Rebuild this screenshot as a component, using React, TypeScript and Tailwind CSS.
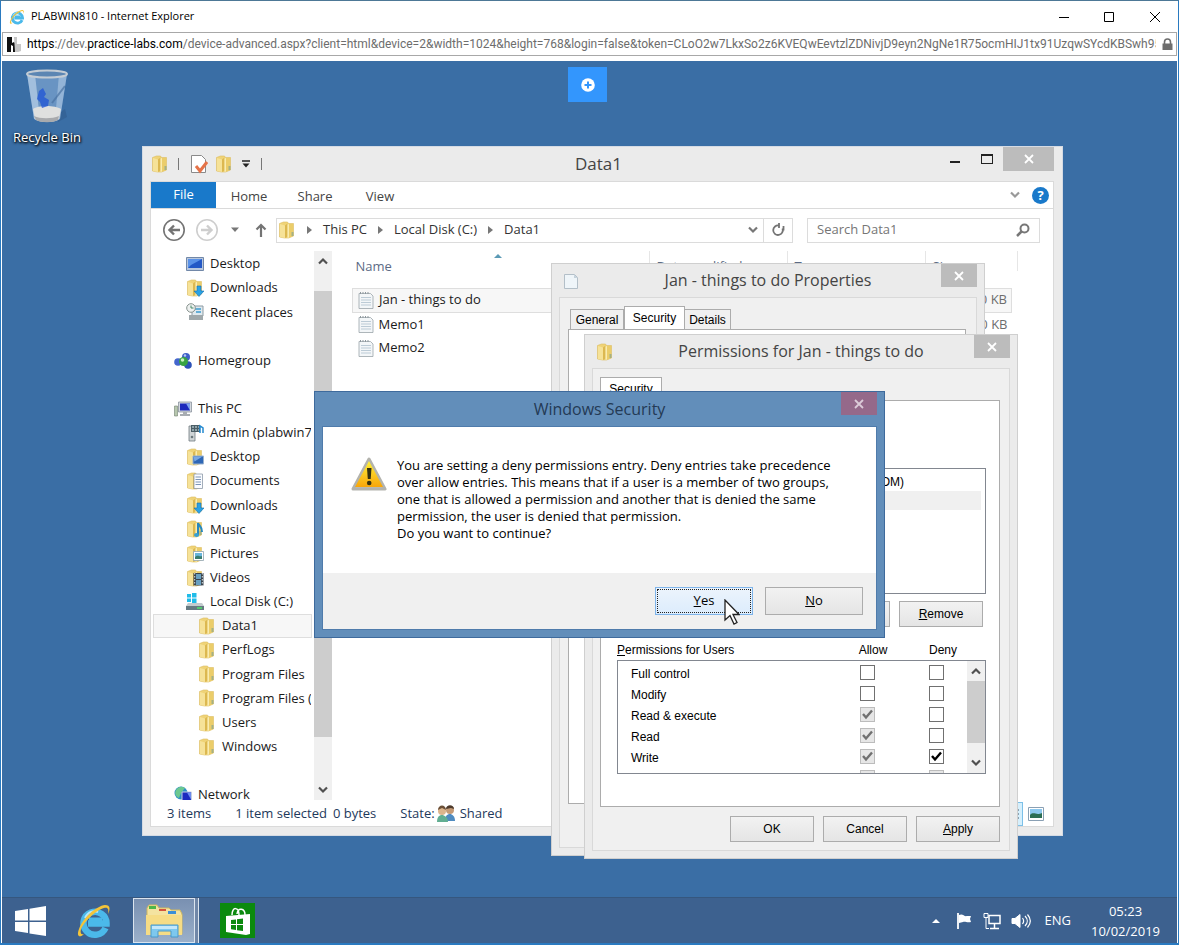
import type { ReactNode } from "react";
import clsx from "clsx";

type IconName =
  | "desktop"
  | "downloads"
  | "recent"
  | "homegroup"
  | "pc"
  | "media"
  | "folderDesktop"
  | "documents"
  | "music"
  | "pictures"
  | "videos"
  | "disk"
  | "folder"
  | "network";

type TreeItem = { label: string; icon: IconName; level: 0 | 1 | 2; selected?: boolean } | null;

const tree: TreeItem[] = [
  { label: "Desktop", icon: "desktop", level: 1 },
  { label: "Downloads", icon: "downloads", level: 1 },
  { label: "Recent places", icon: "recent", level: 1 },
  null,
  { label: "Homegroup", icon: "homegroup", level: 0 },
  null,
  { label: "This PC", icon: "pc", level: 0 },
  { label: "Admin (plabwin701)", icon: "media", level: 1 },
  { label: "Desktop", icon: "folderDesktop", level: 1 },
  { label: "Documents", icon: "documents", level: 1 },
  { label: "Downloads", icon: "downloads", level: 1 },
  { label: "Music", icon: "music", level: 1 },
  { label: "Pictures", icon: "pictures", level: 1 },
  { label: "Videos", icon: "videos", level: 1 },
  { label: "Local Disk (C:)", icon: "disk", level: 1 },
  { label: "Data1", icon: "folder", level: 2, selected: true },
  { label: "PerfLogs", icon: "folder", level: 2 },
  { label: "Program Files", icon: "folder", level: 2 },
  { label: "Program Files (x86)", icon: "folder", level: 2 },
  { label: "Users", icon: "folder", level: 2 },
  { label: "Windows", icon: "folder", level: 2 },
  null,
  { label: "Network", icon: "network", level: 0 },
];

const files = ["Jan - things to do", "Memo1", "Memo2"];

const permissions = [
  { name: "Full control", allow: false, inherited: false, deny: false },
  { name: "Modify", allow: false, inherited: false, deny: false },
  { name: "Read & execute", allow: true, inherited: true, deny: false },
  { name: "Read", allow: true, inherited: true, deny: false },
  { name: "Write", allow: true, inherited: true, deny: true },
];

const FolderShape = () => (
  <>
    <path d="M1.500 2.500 5.500 1h4l1 1.500h5v12.500l-5 2H6.500l-5-1z" fill="#efd377" stroke="#dcbc60" strokeWidth=".6" />
    <path d="M2 3 7 4.500V17L2 16z" fill="#f6e298" />
    <path d="M7 4.500 9.500 2.500v13L7 17z" fill="#dcb850" />
    <path d="M9.500 3.500 11 3v13.500l-1.500.5z" fill="#faecb0" />
    <path d="M11 3h4v12l-4 1.800z" fill="#ebcd6a" />
    <path d="M13.500 11h2v4h-2z" fill="#a5b184" />
  </>
);

const Icon = ({ name, className = "size-[18px]" }: { name: IconName; className?: string }) => (
  <svg viewBox="0 0 18 18" className={clsx("shrink-0", className)} aria-hidden="true">
    {["downloads", "folderDesktop", "documents", "music", "pictures", "videos", "folder"].includes(name) && (
      <FolderShape />
    )}
    {name === "desktop" && (
      <>
        <path d="M.5 2.500h17v13H.5z" fill="#b8c7dd" stroke="#7288a8" />
        <path d="M2 4h14v9H2z" fill="#2358c6" />
        <path d="M2 4h14L5 10l-3 3z" fill="#5a92e8" />
      </>
    )}
    {name === "downloads" && (
      <path d="M11 7h4v5h3l-5 5.500L8 12h3z" fill="#2aa2e4" stroke="#1671ad" strokeWidth=".6" />
    )}
    {name === "recent" && (
      <>
        <path d="M6 3h11v10H6z" fill="#dfe9ee" stroke="#8d9ba3" />
        <path d="M8 6h7M10 9h5" stroke="#3c9ad0" strokeWidth="1.500" />
        <path d="M3 12h14v5H3z" fill="#9fa8ab" />
        <circle cx="5" cy="5" r="4.300" fill="#eef1f0" stroke="#88938f" />
        <path d="M5 2.500V5h2.500" fill="none" stroke="#486" />
      </>
    )}
    {name === "homegroup" && (
      <>
        <circle cx="12" cy="5" r="4" fill="#3f61c8" />
        <circle cx="4" cy="10" r="3.800" fill="#4466cd" />
        <circle cx="14" cy="13" r="3.800" fill="#2c52b8" />
        <circle cx="9.500" cy="9.500" r="4.500" fill="#38a442" />
        <circle cx="8.500" cy="8" r="1.800" fill="#c8f0c0" />
        <circle cx="11" cy="3.500" r="1.200" fill="#b9cbf5" />
      </>
    )}
    {name === "pc" && (
      <>
        <path d="M.5 6h3v10h-3z" fill="#b7c7ae" stroke="#728070" strokeWidth=".6" />
        <path d="M4.500 2h13v10h-13z" fill="#d4d9df" stroke="#7e8894" strokeWidth=".7" />
        <path d="M6 3.500h10v7H6z" fill="#1c28bc" />
        <path d="M12 3.500h4v7z" fill="#7da2ee" />
        <path d="M9 12h4v2h3v2H6v-2h3z" fill="#a8adb2" />
      </>
    )}
    {name === "media" && (
      <>
        <path d="M3 2h6v15H3z" fill="#cfd4d6" stroke="#717b80" strokeWidth=".8" />
        <path d="M5 1h9v7H5z" fill="#4c5e66" />
        <path d="M6 3h7M6 6h7" stroke="#d1e8ee" strokeDasharray="2 1" />
        <path d="M14 9V2l3 2v5" fill="none" stroke="#2489cf" strokeWidth="1.500" />
        <circle cx="6" cy="13" r="1.300" fill="#6a777c" />
      </>
    )}
    {name === "folderDesktop" && (
      <>
        <path d="M7 8h10.500v8H7z" fill="#2e67b6" stroke="#9ab2ce" />
        <path d="M7.500 8.500h9l-8 5z" fill="#79a8e2" />
      </>
    )}
    {name === "documents" && (
      <>
        <path d="M8 2h8.500v14.500H8z" fill="#fafcff" stroke="#8d99a8" strokeWidth=".8" />
        <path d="M9.500 5H15M9.500 7.500H15M9.500 10H15M9.500 12.500H15" stroke="#7c95b6" />
      </>
    )}
    {name === "music" && (
      <>
        <path d="M12 15.500V3c1 3 4.500 4 4 9" fill="none" stroke="#2788be" strokeWidth="2" />
        <ellipse cx="10.500" cy="15" rx="2.500" ry="2" fill="#36a0d4" />
      </>
    )}
    {name === "pictures" && (
      <>
        <path d="M7.500 6.500h10v9h-10z" fill="#fff" stroke="#91a3ae" strokeWidth=".8" />
        <path d="M9 8h7v6H9z" fill="#69b5dc" />
        <path d="M9 12c3-3 4 0 7-1v3H9z" fill="#397d70" />
      </>
    )}
    {name === "videos" && (
      <>
        <path d="M7.500 4h10v12.500h-10z" fill="#39434c" />
        <path d="M10 5h5v5h-5zM10 11h5v5h-5z" fill="#689fc0" />
        <path d="M8.700 4v12.500M16.300 4v12.500" stroke="#dce4e8" strokeDasharray="1.500 1.500" />
      </>
    )}
    {name === "disk" && (
      <>
        <path d="M1 1h4v3.500H1zM6 0h4.500v4.500H6zM1 5.500h4V9H1zM6 5.500h4.500V10H6z" fill="#20bce9" />
        <path d="M2 10h14l2 3H0z" fill="#c3cbce" />
        <path d="M0 13h18v4H0z" fill="#667a82" />
        <path d="M11 14h5v2h-5z" fill="#52c96e" />
      </>
    )}
    {name === "network" && (
      <>
        <circle cx="7" cy="7" r="6.500" fill="#2d8fc8" />
        <path d="M2 4c3-5 8-3 9-2L7 7l-2 5C2 11 0 8 2 4z" fill="#6cc890" />
        <path d="M8 6h9.500v9H8z" fill="#1c2bc0" stroke="#c4cde0" />
        <path d="M13 6.500h4v7z" fill="#6c8cf0" />
      </>
    )}
  </svg>
);

const NoteIcon = () => (
  <svg viewBox="0 0 16 18" className="h-[18px] w-4 shrink-0" aria-hidden="true">
    <path d="M1 2.500h11.500L15 5v12.500H1z" fill="#f3f6f8" stroke="#9aa4aa" strokeWidth=".8" />
    <path d="M3 6.500h10M3 9h10M3 11.500h10M3 14h10" stroke="#bccbd6" />
    <path d="M2.500 3V1M5 3V1M7.500 3V1M10 3V1" stroke="#8d979d" />
  </svg>
);

const IeIcon = ({ className }: { className: string }) => (
  <svg viewBox="0 0 36 36" className={clsx("shrink-0", className)} aria-hidden="true">
    <path d="M29.500 25A11.500 11.500 0 1 1 30.500 20.500H12" fill="none" stroke="#4bb9ea" strokeWidth="6.500" />
    <path d="M13 16.500h13" stroke="#4bb9ea" strokeWidth="4" />
    <path d="M9 15c3-6 8-8 13-6" fill="none" stroke="#b7e8fb" strokeWidth="2" />
    <path
      d="M8 31c-4 4-8 3-5-5C7 15 20 3 29 2c6 0 5 5 3 9 1-5 0-7-4-6C20 7 8 19 5 26c-1 4 0 6 3 5z"
      fill="#f3c43a"
    />
  </svg>
);

const Chevron = ({ up = false, className = "text-[#505050]" }: { up?: boolean; className?: string }) => (
  <svg viewBox="0 0 10 8" className={clsx("h-2 w-[10px] shrink-0", up && "rotate-180", className)} aria-hidden="true">
    <path d="M1 1.500l4 4 4-4" fill="none" stroke="currentColor" strokeWidth="2.200" />
  </svg>
);

const CloseButton = ({ className }: { className: string }) => (
  <button aria-label="Close" className={clsx("flex items-center justify-center", className)}>
    <svg viewBox="0 0 10 10" className="size-[10px]" aria-hidden="true">
      <path d="M1 1l8 8M9 1L1 9" stroke="currentColor" strokeWidth="1.800" />
    </svg>
  </button>
);

const ScrollBar = ({ thumb }: { thumb: string }) => (
  <div className="flex w-[18px] shrink-0 flex-col bg-[#f0f0f0]">
    <button aria-label="Scroll up" className="flex h-5 shrink-0 items-center justify-center">
      <Chevron up />
    </button>
    <div className={clsx("bg-[#cdcdcd]", thumb)} />
    <button aria-label="Scroll down" className="mt-auto flex h-5 shrink-0 items-center justify-center">
      <Chevron />
    </button>
  </div>
);

const ClassicButton = ({ children }: { children: ReactNode }) => (
  <button className="h-[26px] w-[84px] border border-[#acacac] bg-linear-to-b from-[#f2f2f2] to-[#e5e5e5] text-black">
    {children}
  </button>
);

const Tick = ({ label, checked, disabled = false }: { label: string; checked: boolean; disabled?: boolean }) => (
  <span className="inline-grid size-[15px] place-items-center">
    <input
      type="checkbox"
      aria-label={label}
      defaultChecked={checked}
      disabled={disabled}
      className="col-start-1 row-start-1 size-[15px] appearance-none border border-[#707070] bg-white disabled:border-[#bcbcbc] disabled:bg-[#e6e6e6]"
    />
    {checked && (
      <svg
        viewBox="0 0 11 11"
        className={clsx("pointer-events-none col-start-1 row-start-1 size-[11px]", disabled ? "text-[#707070]" : "text-black")}
        aria-hidden="true"
      >
        <path d="M1 5l3 3.500L10 1.500" fill="none" stroke="currentColor" strokeWidth="2.400" />
      </svg>
    )}
  </span>
);

const BrowserChrome = () => (
  <header className="bg-white text-black">
    <div className="flex h-[31px] items-center pl-2">
      <IeIcon className="size-4" />
      <h1 className="ml-[6px] font-['Open_Sans',sans-serif] text-[11px]">PLABWIN810 - Internet Explorer</h1>
      <div className="ml-auto flex">
        <button aria-label="Minimize" className="flex h-7 w-[45px] items-center justify-center">
          <svg viewBox="0 0 12 12" className="size-3">
            <path d="M1 6.500h10" stroke="#000" />
          </svg>
        </button>
        <button aria-label="Maximize" className="flex h-7 w-[45px] items-center justify-center">
          <svg viewBox="0 0 12 12" className="size-3">
            <path d="M1.500 1.500h9v9h-9z" fill="none" stroke="#000" />
          </svg>
        </button>
        <button aria-label="Close window" className="flex h-7 w-[47px] items-center justify-center">
          <svg viewBox="0 0 12 12" className="size-3">
            <path d="M1 1l10 10M11 1L1 11" stroke="#000" />
          </svg>
        </button>
      </div>
    </div>
    <div className="mx-px mb-[5px] flex h-6 items-center border border-[#a8a8a8] pr-[3px] pl-1">
      <svg viewBox="0 0 14 16" className="h-4 w-[14px] shrink-0" aria-hidden="true">
        <path d="M0 1h5v6l2-1 1 1v9H6v-6L4 9v7H0z" fill="#111" />
        <path d="M7 1h3v7h4v7l-3 1H8z" fill="#c7c7c7" />
      </svg>
      <p className="mx-[6px] min-w-0 flex-1 overflow-hidden font-[Roboto,sans-serif] text-[12px] whitespace-nowrap text-[#6d6d6d]">
        <span className="text-black">https</span>://dev.<span className="text-black">practice-labs.com</span>
        /device-advanced.aspx?client=html&amp;device=2&amp;width=1024&amp;height=768&amp;login=false&amp;token=CLoO2w7LkxSo2z6KVEQwEevtzlZDNivjD9eyn2NgNe1R75ocmHIJ1tx91UzqwSYcdKBSwh950
      </p>
      <svg viewBox="0 0 11 13" className="h-[13px] w-[11px] shrink-0" aria-hidden="true">
        <path d="M2.500 6V4a3 3 0 0 1 6 0v2" fill="none" stroke="#6d6d6d" strokeWidth="1.600" />
        <path d="M.5 5.500h10V12H.5z" fill="#6d6d6d" />
      </svg>
    </div>
  </header>
);

const RecycleBin = () => (
  <div className="absolute top-2 left-[5px] flex w-20 flex-col items-center">
    <svg viewBox="0 0 44 54" className="h-[54px] w-11" aria-hidden="true">
      <path d="M32 46l8-6 2 8-9 5z" fill="#2d5789" opacity=".5" />
      <path d="M2 5h40l-7 45c-4 4-22 4-26 0z" fill="#8fb5dc" opacity=".55" />
      <path d="M2 5h8l5 46-6-1z" fill="#dceaf7" opacity=".5" />
      <path d="M34 5h8l-7 45-5 1z" fill="#d2e3f4" opacity=".4" />
      <path d="M8 40c5-4 22-4 28 0l-2 10c-4 4-20 4-24 0z" fill="#dfe0df" />
      <path d="M9 47c6 3 18 3 25 0l-1 4c-5 3-17 3-22 0z" fill="#a8aaad" />
      <path d="M14 22l4-3 3 6-2 3 5 3-1 6-6 2-2-6-3-3z" fill="#2358d4" opacity=".8" />
      <path d="M27 34l13-17" stroke="#4a73a3" strokeWidth="2" opacity=".7" />
      <ellipse cx="22" cy="5" rx="20" ry="3.500" fill="#5c86b3" stroke="#c4ccd4" strokeWidth="2" />
    </svg>
    <span className="mt-1 font-['Open_Sans',sans-serif] text-[13px] leading-5 whitespace-nowrap text-white [text-shadow:1px_1px_2px_#000,0_1px_3px_#000]">
      Recycle Bin
    </span>
  </div>
);

const ExplorerTitle = () => (
  <div className="flex h-[34px] shrink-0 items-center">
    <div className="flex flex-1 items-center pl-px">
      <Icon name="folder" />
      <span className="ml-[9px] h-3 w-px bg-[#777]" />
      <button aria-label="Properties" className="ml-[11px]">
        <svg viewBox="0 0 18 20" className="h-5 w-[18px]">
          <path d="M1.500 1.500h10l4 4v13h-14z" fill="#fff" stroke="#8a8a8a" />
          <path d="M6 12l4 5 7-9" fill="none" stroke="#e57348" strokeWidth="3" />
        </svg>
      </button>
      <button aria-label="New folder" className="ml-[7px]">
        <Icon name="folder" />
      </button>
      <button aria-label="Customize toolbar" className="ml-2">
        <svg viewBox="0 0 10 8" className="h-2 w-[10px]">
          <path d="M1 1h8" stroke="#222" strokeWidth="1.500" />
          <path d="M1.500 3.500h7L5 7.500z" fill="#222" />
        </svg>
      </button>
      <span className="ml-[10px] h-3 w-px bg-[#777]" />
    </div>
    <h2 className="mr-2 text-[17px] text-[#444]">Data1</h2>
    <div className="flex flex-1 justify-end self-start">
      <button aria-label="Minimize" className="flex h-6 w-8 items-center justify-center">
        <span className="mt-[6px] h-[2px] w-[10px] bg-[#222]" />
      </button>
      <button aria-label="Maximize" className="flex h-6 w-8 items-center justify-center">
        <span className="h-[10px] w-3 border border-t-2 border-[#222]" />
      </button>
      <CloseButton className="h-6 w-[51px] bg-[#bcbcbc] text-white" />
    </div>
  </div>
);

const Crumb = ({ children }: { children: ReactNode }) => (
  <>
    <svg viewBox="0 0 5 8" className="mx-[11px] h-2 w-[5px] shrink-0" aria-hidden="true">
      <path d="M0 0l5 4-5 4z" fill="#777" />
    </svg>
    <a href="#" className="whitespace-nowrap">
      {children}
    </a>
  </>
);

const AddressRow = () => (
  <div className="flex h-[42px] shrink-0 items-center pr-[13px] pl-[11px]">
    <button aria-label="Back">
      <svg viewBox="0 0 24 24" className="size-6" fill="none" stroke="#747474">
        <circle cx="12" cy="12" r="10.200" strokeWidth="1.600" />
        <path d="M18 12H8M12 7.500L7.500 12l4.500 4.500" strokeWidth="2.400" />
      </svg>
    </button>
    <button aria-label="Forward" className="ml-[9px]">
      <svg viewBox="0 0 24 24" className="size-6" fill="none" stroke="#cecece">
        <circle cx="12" cy="12" r="10.200" strokeWidth="1.600" />
        <path d="M6 12h10M12 7.500l4.500 4.500-4.500 4.500" strokeWidth="2.400" />
      </svg>
    </button>
    <button aria-label="Recent locations" className="ml-[11px]">
      <svg viewBox="0 0 10 6" className="h-[6px] w-[10px]">
        <path d="M1 .5h8L5 5z" fill="#777" />
      </svg>
    </button>
    <button aria-label="Up" className="ml-[15px]">
      <svg viewBox="0 0 12 14" className="h-[14px] w-3" fill="none" stroke="#747474" strokeWidth="2.200">
        <path d="M6 14V2M1.500 6.500L6 2l4.500 4.500" />
      </svg>
    </button>
    <nav
      aria-label="Address"
      className="ml-[9px] flex h-[25px] min-w-0 flex-1 items-center border border-[#dcdcdc] pl-px text-[#333]"
    >
      <Icon name="folder" />
      <Crumb>This PC</Crumb>
      <Crumb>Local Disk (C:)</Crumb>
      <Crumb>Data1</Crumb>
      <button aria-label="Previous locations" className="mr-px ml-auto p-1">
        <Chevron className="text-[#777]" />
      </button>
      <button aria-label="Refresh" className="flex h-full w-[29px] items-center justify-center border-l border-[#dcdcdc]">
        <svg viewBox="0 0 14 14" className="size-[14px]" fill="none" stroke="#747474" strokeWidth="1.800">
          <path d="M8 2.500a4.800 4.800 0 1 0 3.500 3" />
          <path d="M12.500 7.500V3M8 0v5" />
        </svg>
      </button>
    </nav>
    <label className="ml-[14px] flex h-[25px] w-[233px] items-center border border-[#dcdcdc] pr-[9px] pl-[9px]">
      <input
        aria-label="Search Data1"
        placeholder="Search Data1"
        className="min-w-0 flex-1 outline-none placeholder:text-[#767676]"
      />
      <svg viewBox="0 0 14 14" className="size-[14px]" fill="none" stroke="#777">
        <circle cx="8.500" cy="5.500" r="4" strokeWidth="2" />
        <path d="M5.500 8.500L1 13" strokeWidth="2.500" />
      </svg>
    </label>
  </div>
);

const NavTree = () => (
  <div className="w-[163px] shrink-0 overflow-hidden pt-px">
    <ul className="grid h-[555px] auto-rows-fr">
      {tree.map((item, i) =>
        item ? (
          <li
            key={i}
            className={clsx(
              "mx-[2px] flex items-center gap-[6px] overflow-hidden border whitespace-nowrap",
              item.selected ? "border-[#dedede] bg-[#f7f7f7]" : "border-transparent",
              item.level === 0 && "pl-5",
              item.level === 1 && "pl-8",
              item.level === 2 && "pl-11"
            )}
          >
            <Icon name={item.icon} />
            <span>{item.label}</span>
          </li>
        ) : (
          <li key={i} aria-hidden="true" />
        )
      )}
    </ul>
  </div>
);

const FileTable = () => (
  <div className="relative min-w-0 flex-1 overflow-hidden pl-5">
    <svg viewBox="0 0 8 4" className="absolute top-[3px] left-[162px] h-1 w-2" aria-hidden="true">
      <path d="M0 4l4-4 4 4z" fill="#5b9ab5" />
    </svg>
    <table className="w-[665px] table-fixed border-collapse text-left">
      <colgroup>
        <col className="w-[296px]" />
        <col className="w-[138px]" />
        <col className="w-[138px]" />
        <col className="w-[87px]" />
        <col className="w-[6px]" />
      </colgroup>
      <thead>
        <tr className="h-[37px] align-top text-[#5c6b85]">
          {["Name", "Date modified", "Type", "Size"].map((h, i) => (
            <th key={h} className="p-0 font-normal">
              <div
                className={clsx(
                  "h-5 pt-[5px] leading-5 whitespace-nowrap",
                  i === 0 ? "pl-[3px]" : "border-l border-[#e6e6e6] pl-[7px]"
                )}
              >
                {h}
              </div>
            </th>
          ))}
          <th className="p-0">
            <div className="h-5 border-r border-[#e6e6e6]" />
          </th>
        </tr>
      </thead>
      <tbody>
        {files.map((file, i) => (
          <tr key={file} className="h-6">
            <td className={clsx("p-0", i === 0 && "border border-r-0 border-[#dedede] bg-[#f7f7f7]")}>
              <div className="flex items-center gap-[5px] pl-[5px]">
                <NoteIcon />
                {file}
              </div>
            </td>
            <td
              colSpan={3}
              className={clsx(
                "p-0 pr-1 text-right text-[#6d6d6d]",
                i === 0 && "border border-l-0 border-[#dedede] bg-[#f7f7f7]"
              )}
            >
              0 KB
            </td>
            <td className="p-0" />
          </tr>
        ))}
      </tbody>
    </table>
  </div>
);

const Explorer = () => (
  <section
    aria-label="Data1"
    className="absolute top-[85px] left-[140px] flex h-[690px] w-[921px] flex-col border border-[#d5dbe4] bg-[#ebebeb] pr-2 pb-2 pl-[7px] font-['Open_Sans',sans-serif] text-[13px] text-[#1a1a1a]"
  >
    <ExplorerTitle />
    <div className="flex min-h-0 flex-1 flex-col border border-[#dadada] bg-white">
      <div className="flex h-[27px] shrink-0 items-center border-b border-[#dadada] text-[#444]">
        <button className="h-full w-[65px] bg-[#1979ca] text-white">File</button>
        <button className="w-[66px] pt-1">Home</button>
        <button className="w-[66px] pt-1">Share</button>
        <button className="w-[64px] pt-1">View</button>
        <button aria-label="Expand the ribbon" className="ml-auto">
          <Chevron className="text-[#999]" />
        </button>
        <button
          aria-label="Help"
          className="mr-1 ml-3 size-[17px] rounded-full bg-[#1979ca] text-[13px] leading-[17px] font-bold text-white"
        >
          ?
        </button>
      </div>
      <AddressRow />
      <div className="flex min-h-0 flex-1">
        <NavTree />
        <ScrollBar thumb="mt-5 h-[446px]" />
        <FileTable />
      </div>
      <footer className="flex h-[26px] shrink-0 items-center pt-px pr-[9px] pl-4 text-[#1e395b]">
        <span>3 items</span>
        <span className="ml-6">1 item selected</span>
        <span className="ml-[6px]">0 bytes</span>
        <span className="ml-6">State:</span>
        <svg viewBox="0 0 20 18" className="ml-px h-[18px] w-5" aria-hidden="true">
          <path d="M9 16c0-6 3-7 5-7s5 2 5 7z" fill="#4f8bc0" />
          <circle cx="14" cy="5" r="4" fill="#c49a76" />
          <path d="M10 4c0-5 8-5 8 0l-3-1z" fill="#4e3a2c" />
          <path d="M1 17c0-6 3-7 5-7s6 2 6 7z" fill="#62ae92" />
          <circle cx="6" cy="6" r="4" fill="#dcb58c" />
          <path d="M2 5c0-6 8-6 8 0L6 3z" fill="#6b5038" />
        </svg>
        <span className="ml-1">Shared</span>
        <div className="ml-auto flex items-center">
          <button aria-label="Details view" className="flex size-6 items-center justify-center border border-[#7cc0e8] bg-[#d5effc]">
            <svg viewBox="0 0 20 12" className="h-3 w-5">
              <path d="M1 2h3M1 6h3M1 10h3M6 2h6M6 6h6M6 10h6M14 2h4M14 6h4M14 10h4" stroke="#456" />
            </svg>
          </button>
          <button aria-label="Large icons" className="ml-[5px]">
            <svg viewBox="0 0 16 14" className="h-[14px] w-4">
              <path d="M.5 .5h15v13H.5z" fill="#fff" stroke="#8aa0b4" />
              <path d="M2 2h12v9H2z" fill="#8cc8ee" />
              <path d="M2 8c4-4 6 1 12-2v5H2z" fill="#2c6e54" />
            </svg>
          </button>
        </div>
      </footer>
    </div>
  </section>
);

const PropertiesDialog = () => (
  <section
    aria-label="Jan - things to do Properties"
    className="absolute top-[202px] left-[549px] flex h-[593px] w-[434px] flex-col border border-[#cfcfcf] bg-[#ebebeb] px-[7px] pb-[7px] font-['Liberation_Sans',sans-serif] text-[12px] text-black"
  >
    <div className="flex h-[33px] shrink-0">
      <div className="flex w-9 items-center pl-[5px]">
        <svg viewBox="0 0 14 16" className="h-4 w-[14px]" aria-hidden="true">
          <path d="M.5 1.500h10l3 3v11H.5z" fill="#eff5f9" stroke="#b3bfc8" />
          <path d="M10 1.500v3.500h3.500z" fill="#c5d2db" />
        </svg>
      </div>
      <h2 className="flex-1 text-center font-['Open_Sans',sans-serif] text-[16px] leading-8 text-[#444]">
        Jan - things to do Properties
      </h2>
      <CloseButton className="h-[23px] w-9 bg-[#bcbcbc] text-white" />
    </div>
    <div className="flex min-h-0 flex-1 flex-col border border-[#d9d9d9] bg-[#f0f0f0] pt-2 pr-[10px] pb-[43px] pl-2">
      <div role="tablist" className="flex items-end pl-[2px]">
        <button role="tab" className="h-5 w-[54px] border border-b-0 border-[#acacac]">
          General
        </button>
        <button role="tab" aria-selected="true" className="h-[23px] w-[61px] border border-b-0 border-[#acacac] bg-white">
          Security
        </button>
        <button role="tab" className="h-5 w-[46px] border border-b-0 border-l-0 border-[#acacac]">
          Details
        </button>
      </div>
      <div className="flex-1 border border-[#acacac] bg-white" />
    </div>
  </section>
);

const PermissionsDialog = () => (
  <section
    aria-label="Permissions for Jan - things to do"
    className="absolute top-[273px] left-[582px] flex h-[525px] w-[434px] flex-col border border-[#cfcfcf] bg-[#ebebeb] px-[7px] pb-[7px] font-['Liberation_Sans',sans-serif] text-[12px] text-black"
  >
    <div className="flex h-[33px] shrink-0">
      <div className="flex w-9 items-center pl-1">
        <Icon name="folder" />
      </div>
      <h2 className="flex-1 text-center font-['Open_Sans',sans-serif] text-[16px] leading-8 text-[#444]">
        Permissions for Jan - things to do
      </h2>
      <CloseButton className="h-[23px] w-9 bg-[#bcbcbc] text-white" />
    </div>
    <div className="flex min-h-0 flex-1 flex-col border border-[#d9d9d9] bg-[#f0f0f0] pt-2 pr-[9px] pl-[7px]">
      <div role="tablist" className="flex">
        <button role="tab" aria-selected="true" className="h-[23px] w-[62px] border border-b-0 border-[#acacac] bg-white">
          Security
        </button>
      </div>
      <div className="flex h-[407px] flex-col border border-[#acacac] bg-white px-4 pt-[67px]">
        <ul className="mr-[-3px] h-[126px] shrink-0 border border-[#828790] py-[3px] pr-1">
          <li className="flex h-[19px] items-center justify-end pr-[77px]">(COM)</li>
          <li className="h-[19px] bg-[#f0f0f0]" />
        </ul>
        <div className="mt-[7px] flex justify-end gap-[9px]">
          <ClassicButton>
            A<u>d</u>d...
          </ClassicButton>
          <ClassicButton>
            <u>R</u>emove
          </ClassicButton>
        </div>
        <div className="mt-[13px] mr-[-3px] flex h-5 shrink-0 items-center">
          <h3 className="flex-1">
            <u>P</u>ermissions for Users
          </h3>
          <span className="w-[70px] text-center">Allow</span>
          <span className="w-[70px] text-center">Deny</span>
          <span className="w-[8px]" />
        </div>
        <div className="mr-[-3px] flex h-[114px] shrink-0 overflow-hidden border border-[#828790]">
          <table className="mt-[2px] flex-1 table-fixed self-start">
            <colgroup>
              <col />
              <col className="w-[70px]" />
              <col className="w-[70px]" />
            </colgroup>
            <tbody>
              {permissions.map((p) => (
                <tr key={p.name} className="h-[21px]">
                  <td className="p-0 pl-[13px]">{p.name}</td>
                  <td className="p-0 pl-[33px] leading-none">
                    <Tick label={`Allow ${p.name}`} checked={p.allow} disabled={p.inherited} />
                  </td>
                  <td className="p-0 pl-8 leading-none">
                    <Tick label={`Deny ${p.name}`} checked={p.deny} />
                  </td>
                </tr>
              ))}
              <tr className="h-[21px]">
                <td className="p-0" />
                <td className="p-0 pl-[33px] leading-none">
                  <Tick label="Allow special permissions" checked={false} disabled />
                </td>
                <td className="p-0 pl-8 leading-none">
                  <Tick label="Deny special permissions" checked={false} disabled />
                </td>
              </tr>
            </tbody>
          </table>
          <ScrollBar thumb="h-[62px]" />
        </div>
      </div>
      <div className="mt-[9px] flex justify-end gap-[9px]">
        <ClassicButton>OK</ClassicButton>
        <ClassicButton>Cancel</ClassicButton>
        <ClassicButton>
          <u>A</u>pply
        </ClassicButton>
      </div>
    </div>
  </section>
);

const SecurityDialog = () => (
  <section
    role="alertdialog"
    aria-label="Windows Security"
    className="absolute top-[330px] left-[312px] flex h-[247px] w-[571px] flex-col border border-[#3e6a9c] bg-[#628eba] px-[7px] pb-[7px] font-['Open_Sans',sans-serif] text-[13px] text-black"
  >
    <div className="flex h-[34px] shrink-0">
      <h2 className="flex-1 pl-9 text-center text-[16px] leading-[34px] text-[#243a55]">Windows Security</h2>
      <CloseButton className="h-[23px] w-9 bg-[#95698a] text-[#dccbd8]" />
    </div>
    <div className="flex min-h-0 flex-1 flex-col border border-[#4f7bab] bg-white">
      <div className="flex flex-1 pt-[30px] pl-7">
        <svg viewBox="0 0 36 34" className="h-[34px] w-9 shrink-0" aria-hidden="true">
          <defs>
            <linearGradient id="warn" x1="0" y1="0" x2="0" y2="1">
              <stop offset="0" stopColor="#fff03a" />
              <stop offset="1" stopColor="#f8a60a" />
            </linearGradient>
          </defs>
          <path d="M18 2l16 30H2z" fill="#bfbfb4" stroke="#b3b3ad" strokeWidth="3" strokeLinejoin="round" />
          <path d="M18 4l14 26H4z" fill="url(#warn)" strokeLinejoin="round" />
          <path d="M16 11h4.500l-.8 11h-2.900z" fill="#33300f" />
          <circle cx="18.200" cy="26" r="2.300" fill="#33300f" />
        </svg>
        <p className="ml-[10px] leading-[17px] whitespace-nowrap">
          You are setting a deny permissions entry. Deny entries take precedence
          <br />
          over allow entries. This means that if a user is a member of two groups,
          <br />
          one that is allowed a permission and another that is denied the same
          <br />
          permission, the user is denied that permission.
          <br />
          Do you want to continue?
        </p>
      </div>
      <div className="flex h-[56px] items-center justify-end gap-3 bg-[#f0f0f0] pr-[13px]">
        <button className="h-7 w-[98px] border border-[#7eb4ea] bg-linear-to-b from-[#ecf4fc] to-[#dcecfc] p-px">
          <span className="flex h-full items-center justify-center border border-dotted border-[#222]">
            <span>
              <u>Y</u>es
            </span>
          </span>
        </button>
        <button className="h-7 w-[98px] border border-[#acacac] bg-linear-to-b from-[#f2f2f2] to-[#e5e5e5]">
          <u>N</u>o
        </button>
      </div>
    </div>
  </section>
);

const Taskbar = () => (
  <footer className="flex h-[46px] shrink-0 items-center border-t border-[#35577f] bg-[#3d618f] font-['Open_Sans',sans-serif] text-[13px] text-white">
    <button aria-label="Start" className="ml-[13px]">
      <svg viewBox="0 0 31 30" className="h-[30px] w-[31px]" fill="#fff">
        <path d="M0 5l13-2v11.500H0zM14.500 2.700L31 0v14.500H14.500zM0 16h13v11L0 25zM14.500 16H31v14l-16.500-2.500z" />
      </svg>
    </button>
    <button aria-label="Internet Explorer" className="ml-[30px]">
      <IeIcon className="size-9" />
    </button>
    <button aria-label="File Explorer" className="ml-[21px] flex h-[45px] self-start">
      <span className="flex w-[62px] items-center justify-center border border-[#dbe4ee] bg-linear-to-b from-[#7990b1] to-[#9bb0ca]">
        <svg viewBox="0 0 38 36" className="h-9 w-[38px]">
          <path d="M2 5l2-3h8l2 3h10l2 2h9l2 4v20H2z" fill="#f4e3a0" stroke="#cfb75f" />
          <path d="M4 3h7v3H4z" fill="#4db648" />
          <path d="M14 6h7v2h-7z" fill="#d5533c" />
          <path d="M23 8h8v3h-8z" fill="#3c8fd6" />
          <path d="M1 12h36v20H1z" fill="#f6dc85" />
          <path d="M6 22h27v12h-7v-6H13v6H6z" fill="#7ec8ee" stroke="#4a9acb" />
          <path d="M7 23h25v3H7z" fill="#c4e8fb" />
        </svg>
      </span>
      <span className="w-1 border-r border-[#dbe4ee] bg-[#7087a8]" />
    </button>
    <button aria-label="Store" className="ml-[21px] flex size-[35px] items-center justify-center bg-[#0b8a0e]">
      <svg viewBox="0 0 28 30" className="h-[30px] w-7">
        <path d="M8 9c0-9 7-8 7 0M13 8c1-7 8-6 8 1" fill="none" stroke="#fff" strokeWidth="1.500" />
        <path d="M2 10l24-2v20l-4 1L2 26z" fill="#fff" />
        <path d="M7 14l5-.6v4.600H7zM13 13.300l6-.8V18h-6zM7 19h5v5l-5-.7zM13 19h6v6l-6-.8z" fill="#0b8a0e" />
      </svg>
    </button>
    <div className="ml-auto flex items-center pr-[17px]">
      <button aria-label="Show hidden icons">
        <svg viewBox="0 0 10 6" className="h-[6px] w-[10px]">
          <path d="M1 5l4-4 4 4z" fill="#fff" />
        </svg>
      </button>
      <svg viewBox="0 0 18 18" className="ml-[14px] size-[18px]" role="img" aria-label="Action Center">
        <path d="M3 1v16" stroke="#fff" strokeWidth="1.800" />
        <path d="M4 3c4-2 5 2 8 1h4l-1 3 1 3c-4 1-6-1-8 0l-4 1z" fill="#fff" />
      </svg>
      <svg viewBox="0 0 18 18" className="ml-[10px] size-[18px]" fill="none" stroke="#fff" role="img" aria-label="Network">
        <path d="M6 3.500h11v8H6z" strokeWidth="1.500" />
        <path d="M11.500 12v4M7 16.500h9" strokeWidth="1.500" />
        <path d="M1 1.500h4v4H1zM3 5.500v11h3" />
      </svg>
      <svg viewBox="0 0 20 18" className="ml-[10px] h-[18px] w-5" fill="none" stroke="#fff" role="img" aria-label="Volume">
        <path d="M1 6.500h3L9 2.500v13l-5-4H1z" fill="#fff" />
        <path d="M11.500 6c1.500 2 1.500 4 0 6M14 4c3 3 3 7 0 10M16.500 2.500c3.500 4 3.500 9 0 13" strokeWidth="1.200" />
      </svg>
      <span className="ml-[14px]">ENG</span>
      <div className="ml-5 text-center leading-5">
        <div>05:23</div>
        <div>10/02/2019</div>
      </div>
    </div>
  </footer>
);

const App = () => (
  <div className="flex h-screen w-full flex-col border border-b-2 border-[#2a7ac0] border-t-[#4d7896] bg-white">
    <BrowserChrome />
    <main className="mx-px flex min-h-0 flex-1 flex-col">
      <div className="relative min-h-0 flex-1 overflow-hidden bg-[#3a6ea5]">
        <RecycleBin />
        <button
          aria-label="Open menu"
          className="absolute top-[6px] left-[566px] flex h-[35px] w-[39px] items-center justify-center bg-[#3396fd]"
        >
          <svg viewBox="0 0 14 14" className="size-[14px]">
            <circle cx="7" cy="7" r="6.800" fill="#fff" />
            <path d="M7 3.500v7M3.500 7h7" stroke="#3396fd" strokeWidth="2" />
          </svg>
        </button>
        <Explorer />
        <PropertiesDialog />
        <PermissionsDialog />
        <SecurityDialog />
        <svg viewBox="0 0 16 26" className="absolute top-[538px] left-[722px] h-[26px] w-4" aria-hidden="true">
          <path d="M1 1v20l5-4.500 4 8.500 3-1.500-4-8H15z" fill="#fff" stroke="#222" strokeWidth="1.300" />
        </svg>
      </div>
      <Taskbar />
    </main>
  </div>
);

export default App;
